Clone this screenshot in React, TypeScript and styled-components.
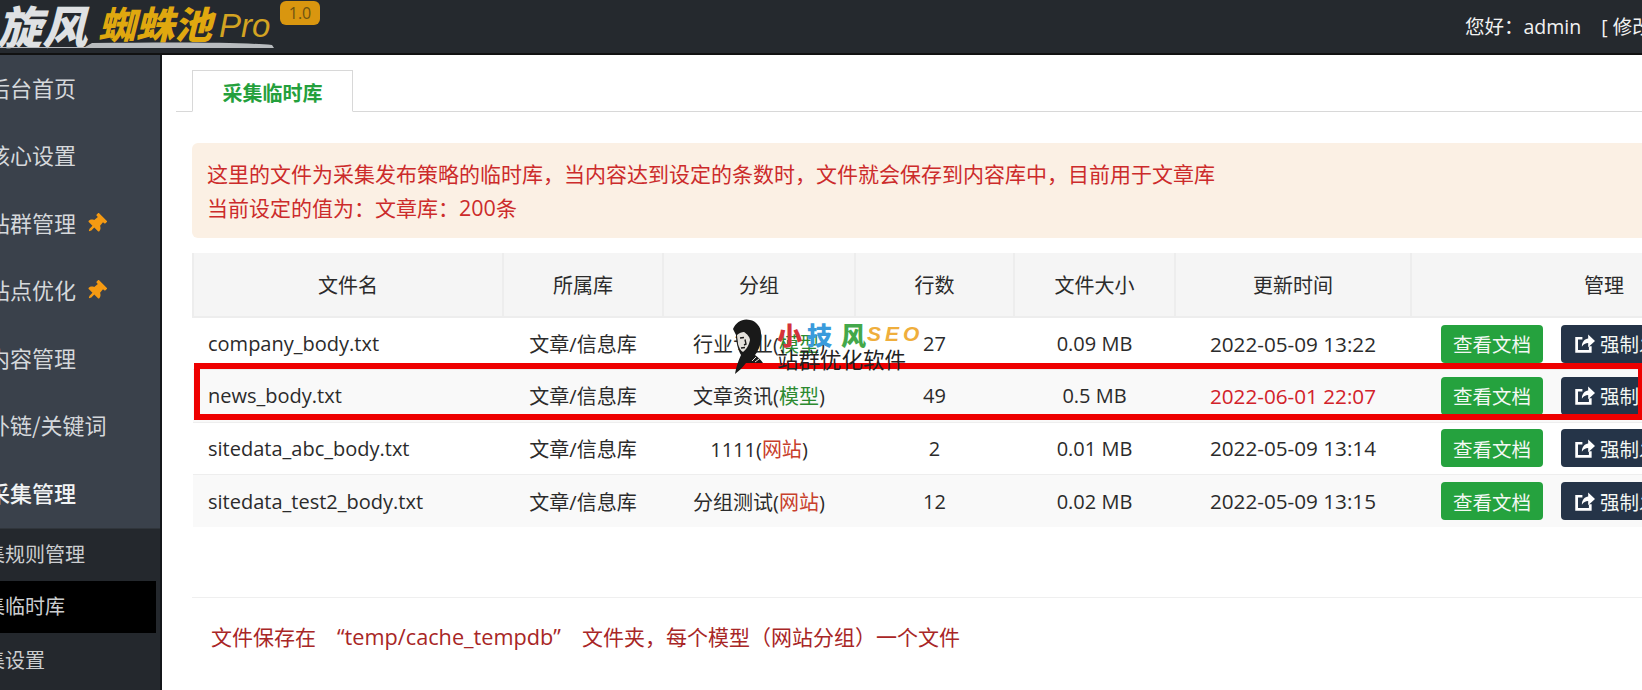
import React from "react";
import styled, { createGlobalStyle } from "styled-components";
import { FaThumbtack } from "react-icons/fa";

const Global = createGlobalStyle`
  html, body { margin: 0; padding: 0; width: 1642px; height: 690px; overflow: hidden; background: #fff; }
  body { font-family: "Open Sans", "Noto Sans CJK SC", sans-serif; color: #2b2b2b; }
  * { box-sizing: border-box; }
`;

const Page = styled.div`
  position: relative;
  width: 1642px;
  height: 690px;
  overflow: hidden;
  display: flex;
  flex-direction: column;
`;

const Header = styled.header`
  height: 55px;
  flex: none;
  background: #25292e;
  border-bottom: 2px solid #111;
  display: flex;
  align-items: flex-start;
  justify-content: space-between;
  overflow: hidden;
`;

const Logo = styled.div`
  position: relative;
  margin-left: -3px;
  height: 53px;
  width: 332px;
  display: flex;
  align-items: flex-start;
  flex: none;
`;

const LogoMain = styled.span`
  font-family: "Noto Sans CJK SC", sans-serif;
  font-weight: 900;
  font-size: 45px;
  line-height: 50px;
  color: #dfe1e3;
  font-style: italic;
  width: 101px;
  flex: none;
  white-space: nowrap;
`;

const LogoGold = styled.span`
  font-family: "Noto Sans CJK SC", sans-serif;
  font-weight: 900;
  font-size: 38px;
  line-height: 46px;
  font-style: italic;
  color: #e0a80f;
  white-space: nowrap;
  flex: none;
`;

const LogoPro = styled.span`
  font-family: "Liberation Sans", sans-serif;
  font-style: italic;
  font-size: 33px;
  line-height: 52px;
  margin-left: 7px;
  color: #d3a322;
  flex: none;
`;

const Swoosh = styled.svg`
  position: absolute;
  left: 3px;
  top: 40px;
`;

const Version = styled.span`
  position: absolute;
  left: 283px;
  top: 1px;
  width: 40px;
  height: 24px;
  border-radius: 6px;
  background: #d9960f;
  color: #6d5312;
  font-size: 16px;
  line-height: 24px;
  text-align: center;
`;

const UserBox = styled.div`
  flex: none;
  width: 177px;
  height: 53px;
  white-space: nowrap;
  overflow: hidden;
  font-size: 19.5px;
  line-height: 53px;
  color: #f2f2f2;
`;

const UserLink = styled.span`
  margin-left: 20px;
`;

const Body = styled.div`
  flex: 1;
  display: flex;
  min-height: 0;
`;

const Sidebar = styled.aside`
  width: 162px;
  flex: none;
  background: #3a414b;
  border-right: 2px solid #14171a;
  overflow: hidden;
`;

const NavItem = styled.div<{ $bright?: boolean }>`
  height: 67.5px;
  padding-bottom: 4px;
  display: flex;
  align-items: center;
  margin-left: -12px;
  font-family: "Noto Sans CJK SC", sans-serif;
  font-size: 22px;
  color: ${(p) => (p.$bright ? "#f1f3f4" : "#d5d8db")};
  font-weight: ${(p) => (p.$bright ? 500 : 400)};
  white-space: nowrap;
`;

const Pin = styled(FaThumbtack)`
  width: 20px;
  height: 20px;
  margin: 4px 0 0 10px;
  color: #f59a12;
  transform: rotate(45deg);
`;

const SubNav = styled.div`
  background: #24282d;
  border-top: 1px solid #30353b;
  height: 170px;
`;

const SubItem = styled.div<{ $active?: boolean }>`
  height: 52px;
  width: 156px;
  margin-bottom: ${(p) => (p.$active ? "2px" : "0")};
  padding-bottom: 2px;
  display: flex;
  align-items: center;
  font-family: "Noto Sans CJK SC", sans-serif;
  font-size: 20px;
  color: #ccced0;
  white-space: nowrap;
  background: ${(p) => (p.$active ? "#000" : "transparent")};
  text-indent: -35px;
`;

const Main = styled.main`
  flex: 1;
  min-width: 0;
  padding: 15px 0 0 14px;
  overflow: hidden;
`;

const TabBar = styled.div`
  height: 42px;
  border-bottom: 1px solid #d8d8d8;
  padding-left: 16px;
`;

const Tab = styled.div`
  width: 161px;
  height: 42px;
  border: 1px solid #d8d8d8;
  border-bottom-color: #fff;
  background: #fff;
  color: #24a03c;
  font-family: "Noto Sans CJK SC", sans-serif;
  font-weight: 700;
  font-size: 20px;
  line-height: 44px;
  text-align: center;
`;

const Content = styled.div`
  padding: 31px 0 0 16px;
  width: 1620px;
`;

const Alert = styled.div`
  height: 95px;
  background: #fbf0e4;
  border-radius: 6px;
  padding: 13px 15px;
  color: #cc2b2b;
  font-family: "Noto Sans CJK SC", sans-serif;
  font-size: 21px;
  line-height: 34px;
`;

const AlertLine = styled.div``;

const AlertNum = styled.span`
  font-family: "Open Sans", sans-serif;
  font-size: 21.5px;
`;

const Table = styled.table`
  margin-top: 15px;
  border-collapse: collapse;
  table-layout: fixed;
  width: 1604px;
  font-size: 20px;
`;

const Th = styled.th<{ $w: number }>`
  width: ${(p) => p.$w}px;
  height: 64px;
  background: #f5f5f5;
  border: 2px solid #ededed;
  border-top: none;
  font-weight: 400;
  font-family: "Noto Sans CJK SC", sans-serif;
  color: #2b2b2b;
  padding: 0;
`;

const Tr = styled.tr<{ $alt?: boolean }>`
  height: 52.5px;
  background: ${(p) => (p.$alt ? "#f9f9f9" : "#fff")};
  border-top: 1px solid #eee;
`;

const Td = styled.td<{ $left?: boolean; $red?: boolean; $wide?: boolean }>`
  padding: 0;
  padding-left: ${(p) => (p.$left ? "15px" : "0")};
  text-align: ${(p) => (p.$left ? "left" : "center")};
  color: ${(p) => (p.$red ? "#d2222a" : "#2b2b2b")};
  font-size: ${(p) => (p.$wide ? "20.7px" : "20px")};
  white-space: nowrap;
  overflow: hidden;
`;

const ActionCell = styled.td`
  padding-left: 30px;
  white-space: nowrap;
`;

const Tag = styled.span<{ $kind: "model" | "site" }>`
  color: ${(p) => (p.$kind === "model" ? "#2c8a30" : "#c8402c")};
`;

const Btn = styled.span<{ $dark?: boolean }>`
  display: inline-flex;
  align-items: center;
  justify-content: center;
  height: 38px;
  width: ${(p) => (p.$dark ? "130px" : "102px")};
  margin-right: 18px;
  border-radius: 4px;
  background: ${(p) => (p.$dark ? "#253448" : "#25a23e")};
  color: #f4f8f4;
  font-family: "Noto Sans CJK SC", sans-serif;
  font-size: 19.5px;
  vertical-align: middle;
`;

const ShareIcon = styled.svg`
  width: 21px;
  height: 21px;
  margin-right: 5px;
  flex: none;
`;

const Divider = styled.div`
  margin-top: 70px;
  border-top: 1px solid #efefef;
  padding: 25px 0 0 19px;
  font-size: 21px;
  line-height: 28px;
  color: #a82626;
  white-space: nowrap;
`;

const PathText = styled.span`
  margin: 0 21px;
  font-size: 21.7px;
`;

const Highlight = styled.div`
  position: absolute;
  left: 194px;
  top: 363px;
  width: 1448px;
  height: 57px;
  border: 6px solid #ee0000;
  border-right-width: 4px;
  pointer-events: none;
`;

const Mark = styled.div`
  position: absolute;
  left: 733px;
  top: 318px;
  width: 190px;
  height: 58px;
  pointer-events: none;
`;

const Portrait = styled.svg`
  position: absolute;
  left: 0;
  top: 0;
`;

const Brand = styled.div`
  position: absolute;
  left: 44px;
  top: 2px;
  display: flex;
  align-items: center;
  font-family: "Noto Sans CJK SC", sans-serif;
  font-weight: 900;
  font-size: 25px;
  line-height: 28px;
  white-space: nowrap;
`;

const BrandCh = styled.span<{ $c: string; $gap: number }>`
  color: ${(p) => p.$c};
  margin-right: ${(p) => p.$gap}px;
`;

const BrandSeo = styled.span`
  font-family: "Liberation Sans", sans-serif;
  font-style: italic;
  font-weight: 700;
  font-size: 21px;
  letter-spacing: 4px;
  color: #efae3c;
`;

const Slogan = styled.div`
  position: absolute;
  left: 44px;
  top: 26px;
  font-family: "Noto Sans CJK SC", sans-serif;
  font-size: 21.5px;
  line-height: 30px;
  color: #222;
  white-space: nowrap;
`;

const cols = [
  ["文件名", 310],
  ["所属库", 160],
  ["分组", 192],
  ["行数", 159],
  ["文件大小", 161],
  ["更新时间", 236],
  ["管理", 386],
] as const;

const rows = [
  { f: "company_body.txt", g: "行业专业", k: "model" as const, n: "27", s: "0.09 MB", t: "2022-05-09 13:22" },
  { f: "news_body.txt", g: "文章资讯", k: "model" as const, n: "49", s: "0.5 MB", t: "2022-06-01 22:07", red: true },
  { f: "sitedata_abc_body.txt", g: "1111", k: "site" as const, n: "2", s: "0.01 MB", t: "2022-05-09 13:14" },
  { f: "sitedata_test2_body.txt", g: "分组测试", k: "site" as const, n: "12", s: "0.02 MB", t: "2022-05-09 13:15" },
];

export default function App() {
  return (
    <Page>
      <Global />
      <Header>
        <Logo>
          <LogoMain>旋风</LogoMain>
          <LogoGold>蜘蛛池</LogoGold>
          <LogoPro>Pro</LogoPro>
          <Swoosh width="275" height="9" viewBox="0 0 275 9">
            <path d="M0 7 H 85 L 92 3 C 170 2 240 2 272 5 L 274 8 H 0 Z" fill="#b9bcbf" />
          </Swoosh>
          <Version>1.0</Version>
        </Logo>
        <UserBox>
          您好：admin<UserLink>[ 修改密码 ]</UserLink>
        </UserBox>
      </Header>
      <Body>
        <Sidebar>
          <NavItem>后台首页</NavItem>
          <NavItem>核心设置</NavItem>
          <NavItem>
            站群管理
            <Pin />
          </NavItem>
          <NavItem>
            站点优化
            <Pin />
          </NavItem>
          <NavItem>内容管理</NavItem>
          <NavItem>外链/关键词</NavItem>
          <NavItem $bright>采集管理</NavItem>
          <SubNav>
            <SubItem>采集规则管理</SubItem>
            <SubItem $active>采集临时库</SubItem>
            <SubItem>采集设置</SubItem>
          </SubNav>
        </Sidebar>
        <Main>
          <TabBar>
            <Tab>采集临时库</Tab>
          </TabBar>
          <Content>
            <Alert>
              <AlertLine>这里的文件为采集发布策略的临时库，当内容达到设定的条数时，文件就会保存到内容库中，目前用于文章库</AlertLine>
              <AlertLine>
                当前设定的值为：文章库：<AlertNum>200</AlertNum>条
              </AlertLine>
            </Alert>
            <Table>
              <thead>
                <tr>
                  {cols.map(([t, w]) => (
                    <Th key={t} $w={w}>
                      {t}
                    </Th>
                  ))}
                </tr>
              </thead>
              <tbody>
                {rows.map((r, i) => (
                  <Tr key={r.f} $alt={i % 2 === 1}>
                    <Td $left>{r.f}</Td>
                    <Td>文章/信息库</Td>
                    <Td>
                      {r.g}(<Tag $kind={r.k}>{r.k === "model" ? "模型" : "网站"}</Tag>)
                    </Td>
                    <Td>{r.n}</Td>
                    <Td>{r.s}</Td>
                    <Td $red={r.red} $wide>
                      {r.t}
                    </Td>
                    <ActionCell>
                      <Btn>查看文档</Btn>
                      <Btn $dark>
                        <ShareIcon viewBox="0 0 20 20">
                          <path d="M15.5 12.5V17.5H2.5V5H8" fill="none" stroke="#fff" strokeWidth="2.6" />
                          <path d="M7.5 13C7.5 8 10.5 5.5 13.5 5.2V1.5L20 7.5L13.5 13.5V9.6C11 9.6 9 10.8 7.5 13Z" fill="#fff" />
                        </ShareIcon>
                        强制发布
                      </Btn>
                    </ActionCell>
                  </Tr>
                ))}
              </tbody>
            </Table>
            <Divider>
              文件保存在<PathText>“temp/cache_tempdb”</PathText>文件夹，每个模型（网站分组）一个文件
            </Divider>
          </Content>
        </Main>
      </Body>
      <Highlight />
      <Mark>
        <Portrait width="32" height="58" viewBox="0 0 32 58">
          <path d="M0 11 C3 4 10 0 17 2 C23 3 28 9 28 15 C29 20 28 25 26 30 C24 34 23 36 22 37 C25 39 28 42 30 45 C24 45 17 45 13 45 C10 49 6 53 2 56 C3 50 5 43 8 37 C5 32 3 24 3 17 C2 15 1 13 0 11 Z" fill="#191919" />
          <path d="M4 17 C6 15 9 14 11 14 C14 16 17 19 17 22 C16 26 15 30 10 34 C8 33 6 30 5 26 C5 23 4 20 4 17 Z" fill="#e4e1dc" />
          <path d="M7 20 L11 19.5 M12 21.5 L13 26 L11 27 M8 30 L12 29.5" fill="none" stroke="#191919" strokeWidth="1.4" />
          <path d="M19 43 L23 39 M22 44 L26 41" fill="none" stroke="#e4e1dc" strokeWidth="1" />
        </Portrait>
        <Brand>
          <BrandCh $c="#d4333a" $gap={5}>小</BrandCh>
          <BrandCh $c="#3a9bdc" $gap={9}>技</BrandCh>
          <BrandCh $c="#43a84a" $gap={1}>风</BrandCh>
          <BrandSeo>SEO</BrandSeo>
        </Brand>
        <Slogan>站群优化软件</Slogan>
      </Mark>
    </Page>
  );
}
